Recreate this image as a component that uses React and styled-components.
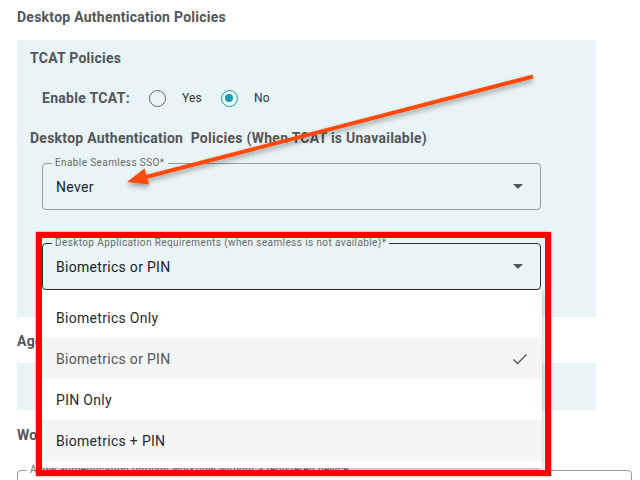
import React from "react";
import styled, { createGlobalStyle } from "styled-components";

const Global = createGlobalStyle`
  html, body { margin: 0; padding: 0; background: #fff; }
  body { font-family: Roboto, "Noto Sans", sans-serif; width: 640px; height: 480px; overflow: hidden; }
  * { box-sizing: border-box; }
`;

const Page = styled.div`
  position: relative;
  width: 640px;
  height: 480px;
  padding: 9px 9px 0 17px;
  display: flex;
  flex-direction: column;
  overflow: hidden;
  & > * { flex-shrink: 0; }
`;

const SectionTitle = styled.div`
  font-size: 14px;
  font-weight: 700;
  letter-spacing: 0.25px;
  color: #555;
  line-height: 16px;
  height: 16px;
  margin-bottom: ${(p) => p.$mb || 15}px;
`;

const Panel = styled.div`
  width: 579px;
  background: #e8f4f5;
  padding: ${(p) => p.$pad || "10px 13px 27px 13px"};
  height: ${(p) => (p.$h ? p.$h + "px" : "auto")};
  display: flex;
  flex-direction: column;
  margin-bottom: ${(p) => p.$mb || 0}px;
`;

const SubTitle = styled.div`
  font-size: 14px;
  font-weight: 700;
  letter-spacing: 0.25px;
  color: #555;
  line-height: 16px;
  margin-top: ${(p) => p.$mt || 0}px;
`;

const RadioRow = styled.div`
  display: flex;
  align-items: center;
  margin: 24px 0 0 12px;
  height: 16px;
`;

const RadioLabel = styled.span`
  font-size: 14px;
  font-weight: 700;
  letter-spacing: 0.3px;
  color: #555;
  margin-right: 19px;
`;

const RadioOption = styled.label`
  display: flex;
  align-items: center;
  margin-right: 19px;
  font-size: 12px;
  letter-spacing: 0.2px;
  color: #333;
`;

const RadioCircle = styled.span`
  width: 17px;
  height: 17px;
  border-radius: 50%;
  border: 1.5px solid ${(p) => (p.$on ? "#1c9cb2" : "#666")};
  display: flex;
  align-items: center;
  justify-content: center;
  margin-right: 16px;
  &::after {
    content: "";
    width: 8px;
    height: 8px;
    border-radius: 50%;
    background: ${(p) => (p.$on ? "#1c9cb2" : "transparent")};
  }
`;

const FieldWrap = styled.div`
  position: relative;
  margin: ${(p) => p.$m || "0 0 0 12px"};
  width: ${(p) => p.$w || 499}px;
`;

const Outline = styled.div`
  height: ${(p) => p.$h || 47}px;
  border: 1px solid ${(p) => (p.$focus ? "#333" : "#9a9a9a")};
  border-radius: 4px;
  display: flex;
  align-items: center;
  padding: 0 13px 0 13px;
  justify-content: space-between;
`;

const FloatLabel = styled.span`
  position: absolute;
  top: -7px;
  left: 10px;
  padding: 0 3px;
  font-size: 10px;
  letter-spacing: 0.4px;
  line-height: 13px;
  color: #6a6a6a;
  background: ${(p) => p.$bg || "#e8f4f5"};
  white-space: nowrap;
`;

const Value = styled.span`
  font-size: 14px;
  letter-spacing: 0.3px;
  color: #222;
`;

const Caret = styled.span`
  width: 0;
  height: 0;
  border-left: 5px solid transparent;
  border-right: 5px solid transparent;
  border-top: 5px solid #555;
  margin-right: 4px;
`;

const Menu = styled.div`
  position: absolute;
  top: 47px;
  left: 0;
  width: 500px;
  background: #fff;
  padding: 7px 0 7px 0;
  box-shadow: 0 3px 5px rgba(0, 0, 0, 0.25), -1px 0 3px rgba(0, 0, 0, 0.1);
  z-index: 5;
`;

const MenuItem = styled.div`
  height: 41px;
  display: flex;
  align-items: center;
  justify-content: space-between;
  padding: 0 14px 0 14px;
  font-size: 14px;
  letter-spacing: 0.3px;
  color: ${(p) => (p.$selected ? "#555" : "#2b2b2b")};
  background: ${(p) => (p.$shade ? "#f5f5f5" : "#fff")};
`;

const RedBox = styled.div`
  position: absolute;
  left: 36px;
  top: 232px;
  width: 515px;
  height: 244px;
  border: 6px solid #ff0000;
  box-shadow: 0 0 2px rgba(255, 0, 0, 0.6);
  z-index: 6;
  pointer-events: none;
`;

const ArrowSvg = styled.svg`
  position: absolute;
  left: 0;
  top: 0;
  z-index: 7;
  pointer-events: none;
`;

const Check = () => (
  <svg width="16" height="12" viewBox="0 0 16 12">
    <path d="M1.5 6.5 L5.5 10.5 L14.5 1.5" fill="none" stroke="#555" strokeWidth="1.4" />
  </svg>
);

const options = ["Biometrics Only", "Biometrics or PIN", "PIN Only", "Biometrics + PIN"];

export default function App() {
  return (
    <>
      <Global />
      <Page>
        <SectionTitle>Desktop Authentication Policies</SectionTitle>
        <Panel $mb={16}>
          <SubTitle>TCAT Policies</SubTitle>
          <RadioRow>
            <RadioLabel>Enable TCAT:</RadioLabel>
            <RadioOption>
              <RadioCircle />
              Yes
            </RadioOption>
            <RadioOption>
              <RadioCircle $on />
              No
            </RadioOption>
          </RadioRow>
          <SubTitle $mt={24}>Desktop Authentication&nbsp; Policies (When TCAT is Unavailable)</SubTitle>
          <FieldWrap $m="17px 0 0 12px">
            <FloatLabel>Enable Seamless SSO*</FloatLabel>
            <Outline>
              <Value>Never</Value>
              <Caret />
            </Outline>
          </FieldWrap>
          <FieldWrap $m="33px 0 0 12px">
            <FloatLabel>Desktop Application Requirements (when seamless is not available)*</FloatLabel>
            <Outline $focus>
              <Value>Biometrics or PIN</Value>
              <Caret />
            </Outline>
            <Menu>
              {options.map((o, i) => (
                <MenuItem key={o} $shade={i % 2 === 1} $selected={i === 1}>
                  {o}
                  {i === 1 && <Check />}
                </MenuItem>
              ))}
            </Menu>
          </FieldWrap>
        </Panel>
        <SectionTitle $mb={14}>Agent Authentication Policies</SectionTitle>
        <Panel $h={47} $mb={17} />
        <SectionTitle $mb={27}>Workflow Authentication Policies</SectionTitle>
        <FieldWrap $m="0" $w={615}>
          <FloatLabel $bg="#fff">Allow authentication through workflow without a registered device</FloatLabel>
          <Outline $h={40} />
        </FieldWrap>
        <RedBox />
        <ArrowSvg width="640" height="480" viewBox="0 0 640 480">
          <defs>
            <filter id="sh" x="-10%" y="-50%" width="120%" height="200%">
              <feDropShadow dx="0" dy="3" stdDeviation="2.5" floodColor="#000" floodOpacity="0.35" />
            </filter>
          </defs>
          <g filter="url(#sh)">
            <line x1="533" y1="76.5" x2="144" y2="177.5" stroke="#ff4a0a" strokeWidth="4" />
            <polygon points="127,182 149,184.5 144.5,168.5" fill="#ff4a0a" />
          </g>
        </ArrowSvg>
      </Page>
    </>
  );
}
